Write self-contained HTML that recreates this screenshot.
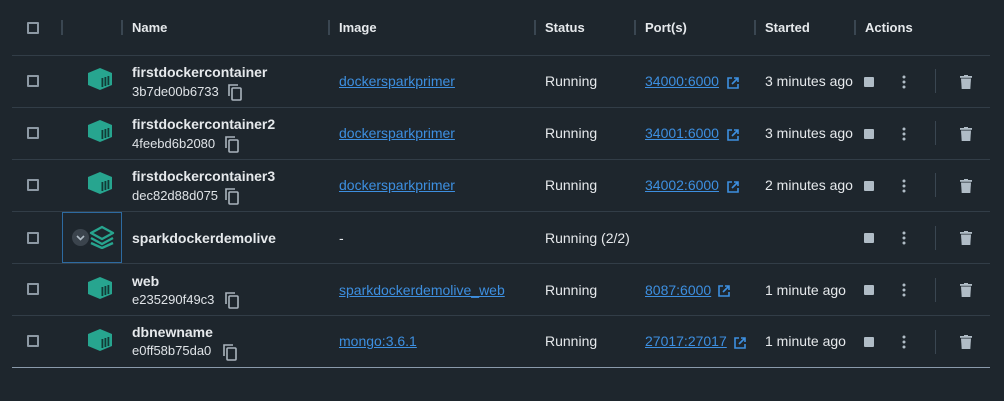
<!DOCTYPE html>
<html><head><meta charset="utf-8"><style>
*{margin:0;padding:0;box-sizing:border-box}
body{width:1004px;height:401px;background:#1e262d;font-family:"Liberation Sans",sans-serif;color:#e6e9ec;position:relative;overflow:hidden}
.a{position:absolute;white-space:nowrap}
.h{font-size:13px;font-weight:bold;top:20px}
.sep{position:absolute;top:20px;width:2px;height:15px;background:#3a4651}
.line{position:absolute;left:12px;width:978px;height:1px;background:#323d47}
.cb{position:absolute;left:27px;width:12px;height:12px;border:2px solid #8d99a4;border-radius:1px}
.nm{font-size:14px;font-weight:bold}
.id{font-size:13px;color:#dfe3e7}
.lk{color:#3d8fe0;text-decoration:underline;font-size:14px}
.t{font-size:14px}
.stop{position:absolute;left:864px;width:10px;height:10px;background:#b0bcc6;border-radius:1px}
.vs{position:absolute;left:935px;width:1px;height:24px;background:#3a4651}
</style></head><body>
<div class="cb" style="top:22px"></div>
<div class="sep" style="left:61px"></div>
<div class="sep" style="left:121px"></div>
<div class="a h" style="left:132px">Name</div>
<div class="sep" style="left:328px"></div>
<div class="a h" style="left:339px">Image</div>
<div class="sep" style="left:534px"></div>
<div class="a h" style="left:545px">Status</div>
<div class="sep" style="left:634px"></div>
<div class="a h" style="left:645px">Port(s)</div>
<div class="sep" style="left:754px"></div>
<div class="a h" style="left:765px">Started</div>
<div class="sep" style="left:854px"></div>
<div class="a h" style="left:865px">Actions</div>

<div class="line" style="top:55px"></div>
<div class="line" style="top:107px"></div>
<div class="line" style="top:159px"></div>
<div class="line" style="top:211px"></div>
<div class="line" style="top:263px"></div>
<div class="line" style="top:315px"></div>
<div class="line" style="top:367px;background:#8a9aab"></div>

<svg width="0" height="0" style="position:absolute"><defs>
<symbol id="box" viewBox="0 0 24 22"><path d="M0 5 L12 0 L24 5 L24 17 L12 22 L0 17 Z" fill="#27a58f"/><rect x="13.5" y="10" width="1.8" height="9" fill="#123b36"/><rect x="16.5" y="9" width="1.8" height="9" fill="#123b36"/><rect x="19.5" y="8" width="1.8" height="9" fill="#123b36"/></symbol>
<symbol id="copy" viewBox="0 0 16 18"><path d="M2 13 V2 H11" fill="none" stroke="#aab4bd" stroke-width="1.6"/><rect x="5" y="5" width="9" height="12" fill="none" stroke="#aab4bd" stroke-width="1.6" rx="1"/></symbol>
<symbol id="ext" viewBox="0 0 12 12"><path d="M5 1 H1 V11 H11 V7" fill="none" stroke="#3d8fe0" stroke-width="1.6"/><path d="M7 1 H11 V5 M11 1 L5 7" fill="none" stroke="#3d8fe0" stroke-width="1.6"/></symbol>
<symbol id="trash" viewBox="0 0 12 14"><rect x="0" y="1" width="12" height="1.8" fill="#b0bcc6"/><rect x="4" y="0" width="4" height="1.5" fill="#b0bcc6"/><path d="M1 3.5 H11 L10.3 14 H1.7 Z" fill="#b0bcc6"/></symbol>
<symbol id="dots" viewBox="0 0 4 14"><circle cx="2" cy="2" r="1.5" fill="#b0bcc6"/><circle cx="2" cy="7" r="1.5" fill="#b0bcc6"/><circle cx="2" cy="12" r="1.5" fill="#b0bcc6"/></symbol>
</defs></svg>

<!-- row 1 -->
<div class="cb" style="top:75px"></div>
<svg class="a" style="left:88px;top:68px" width="24" height="22"><use href="#box"/></svg>
<div class="a nm" style="left:132px;top:64px">firstdockercontainer</div>
<div class="a id" style="left:132px;top:84px">3b7de00b6733</div>
<svg class="a" style="left:227px;top:83px" width="16" height="18"><use href="#copy"/></svg>
<div class="a lk" style="left:339px;top:73px">dockersparkprimer</div>
<div class="a t" style="left:545px;top:73px">Running</div>
<div class="a lk" style="left:645px;top:73px">34000:6000</div>
<svg class="a" style="left:727px;top:77px" width="12" height="12"><use href="#ext"/></svg>
<div class="a t" style="left:765px;top:73px">3 minutes ago</div>
<div class="stop" style="top:77px"></div>
<svg class="a" style="left:902px;top:75px" width="4" height="14"><use href="#dots"/></svg>
<div class="vs" style="top:69px"></div>
<svg class="a" style="left:960px;top:75px" width="12" height="14"><use href="#trash"/></svg>

<!-- row 2 -->
<div class="cb" style="top:127px"></div>
<svg class="a" style="left:88px;top:120px" width="24" height="22"><use href="#box"/></svg>
<div class="a nm" style="left:132px;top:116px">firstdockercontainer2</div>
<div class="a id" style="left:132px;top:136px">4feebd6b2080</div>
<svg class="a" style="left:224px;top:135px" width="16" height="18"><use href="#copy"/></svg>
<div class="a lk" style="left:339px;top:125px">dockersparkprimer</div>
<div class="a t" style="left:545px;top:125px">Running</div>
<div class="a lk" style="left:645px;top:125px">34001:6000</div>
<svg class="a" style="left:727px;top:129px" width="12" height="12"><use href="#ext"/></svg>
<div class="a t" style="left:765px;top:125px">3 minutes ago</div>
<div class="stop" style="top:129px"></div>
<svg class="a" style="left:902px;top:127px" width="4" height="14"><use href="#dots"/></svg>
<div class="vs" style="top:121px"></div>
<svg class="a" style="left:960px;top:127px" width="12" height="14"><use href="#trash"/></svg>

<!-- row 3 -->
<div class="cb" style="top:179px"></div>
<svg class="a" style="left:88px;top:172px" width="24" height="22"><use href="#box"/></svg>
<div class="a nm" style="left:132px;top:168px">firstdockercontainer3</div>
<div class="a id" style="left:132px;top:188px">dec82d88d075</div>
<svg class="a" style="left:224px;top:187px" width="16" height="18"><use href="#copy"/></svg>
<div class="a lk" style="left:339px;top:177px">dockersparkprimer</div>
<div class="a t" style="left:545px;top:177px">Running</div>
<div class="a lk" style="left:645px;top:177px">34002:6000</div>
<svg class="a" style="left:727px;top:181px" width="12" height="12"><use href="#ext"/></svg>
<div class="a t" style="left:765px;top:177px">2 minutes ago</div>
<div class="stop" style="top:181px"></div>
<svg class="a" style="left:902px;top:179px" width="4" height="14"><use href="#dots"/></svg>
<div class="vs" style="top:173px"></div>
<svg class="a" style="left:960px;top:179px" width="12" height="14"><use href="#trash"/></svg>

<!-- row 4 group -->
<div class="cb" style="top:232px"></div>
<div class="a" style="left:62px;top:212px;width:60px;height:51px;border:1px solid #2d6aa0"></div>
<div class="a" style="left:72px;top:229px;width:17px;height:17px;border-radius:50%;background:#3b444d"></div>
<svg class="a" style="left:75px;top:234px" width="11" height="8"><path d="M2 2 L5.5 5.5 L9 2" fill="none" stroke="#b0bcc6" stroke-width="1.6"/></svg>
<svg class="a" style="left:89px;top:225px" width="26" height="24" viewBox="0 0 26 24"><path d="M13 2 L24 8 L13 14 L2 8 Z" fill="none" stroke="#27a58f" stroke-width="2.4" stroke-linejoin="round"/><path d="M2 13 L13 19 L24 13" fill="none" stroke="#27a58f" stroke-width="2.4"/><path d="M2 18 L13 23 L24 18" fill="none" stroke="#27a58f" stroke-width="2.4"/></svg>
<div class="a nm" style="left:132px;top:230px">sparkdockerdemolive</div>
<div class="a t" style="left:339px;top:230px">-</div>
<div class="a t" style="left:545px;top:230px">Running (2/2)</div>
<div class="stop" style="top:233px"></div>
<svg class="a" style="left:902px;top:231px" width="4" height="14"><use href="#dots"/></svg>
<div class="vs" style="top:226px"></div>
<svg class="a" style="left:960px;top:231px" width="12" height="14"><use href="#trash"/></svg>

<!-- row 5 -->
<div class="cb" style="top:283px"></div>
<svg class="a" style="left:88px;top:277px" width="24" height="22"><use href="#box"/></svg>
<div class="a nm" style="left:132px;top:273px">web</div>
<div class="a id" style="left:132px;top:292px">e235290f49c3</div>
<svg class="a" style="left:224px;top:291px" width="16" height="18"><use href="#copy"/></svg>
<div class="a lk" style="left:339px;top:282px">sparkdockerdemolive_web</div>
<div class="a t" style="left:545px;top:282px">Running</div>
<div class="a lk" style="left:645px;top:282px">8087:6000</div>
<svg class="a" style="left:718px;top:285px" width="12" height="12"><use href="#ext"/></svg>
<div class="a t" style="left:765px;top:282px">1 minute ago</div>
<div class="stop" style="top:285px"></div>
<svg class="a" style="left:902px;top:283px" width="4" height="14"><use href="#dots"/></svg>
<div class="vs" style="top:278px"></div>
<svg class="a" style="left:960px;top:283px" width="12" height="14"><use href="#trash"/></svg>

<!-- row 6 -->
<div class="cb" style="top:335px"></div>
<svg class="a" style="left:88px;top:329px" width="24" height="22"><use href="#box"/></svg>
<div class="a nm" style="left:132px;top:324px">dbnewname</div>
<div class="a id" style="left:132px;top:343px">e0ff58b75da0</div>
<svg class="a" style="left:222px;top:343px" width="16" height="18"><use href="#copy"/></svg>
<div class="a lk" style="left:339px;top:333px">mongo:3.6.1</div>
<div class="a t" style="left:545px;top:333px">Running</div>
<div class="a lk" style="left:645px;top:333px">27017:27017</div>
<svg class="a" style="left:734px;top:337px" width="12" height="12"><use href="#ext"/></svg>
<div class="a t" style="left:765px;top:333px">1 minute ago</div>
<div class="stop" style="top:337px"></div>
<svg class="a" style="left:902px;top:335px" width="4" height="14"><use href="#dots"/></svg>
<div class="vs" style="top:330px"></div>
<svg class="a" style="left:960px;top:335px" width="12" height="14"><use href="#trash"/></svg>
</body></html>
